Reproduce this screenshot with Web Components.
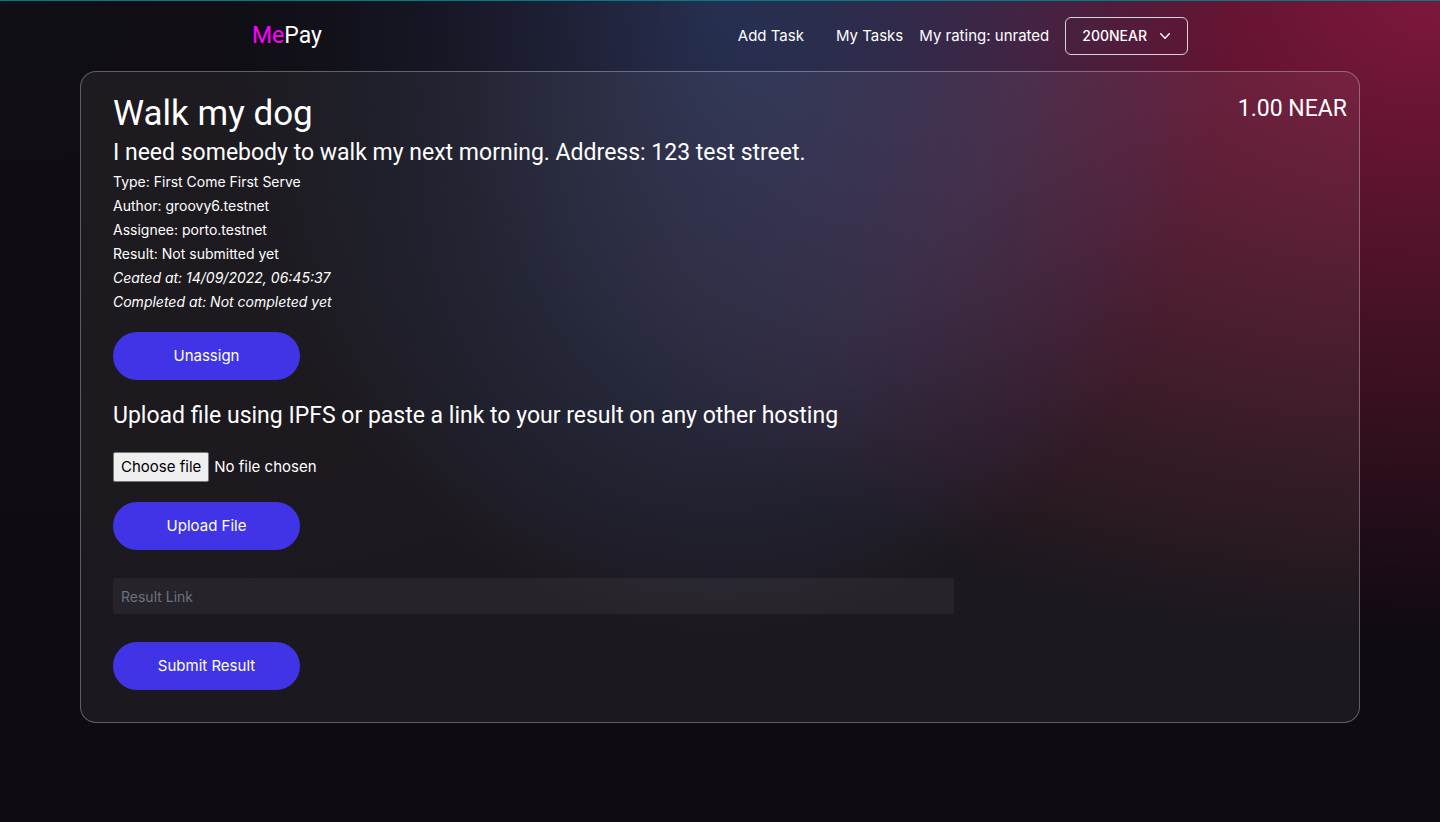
<!DOCTYPE html>
<html lang="en">
<head>
  <meta charset="utf-8">
  <meta name="viewport" content="width=device-width, initial-scale=1">
  <title>MePay</title>
  <style>
    body {
      --display: Roboto, "Liberation Sans", sans-serif;
      margin: 0;
      min-height: 100vh;
      box-sizing: border-box;
      border-top: 1px solid #007c89;
      color: #fff;
      font: 15px/24px Inter, "Liberation Sans", sans-serif;
      background-color: #0f0b12;
      background-image:
        radial-gradient(at 0% 0%, hsl(253, 16%, 7%) 0, transparent 50%),
        radial-gradient(at 50% 0%, hsl(225, 39%, 30%) 0, transparent 50%),
        radial-gradient(at 100% 0%, hsl(339, 69%, 29%) 0, transparent 50%);
      background-size: 100% 109vh;
      background-repeat: no-repeat;
    }
  </style>
</head>
<body>
  <mepay-app></mepay-app>

  <script>
    function define(name, html) {
      const template = document.createElement("template")
      template.innerHTML = html

      window.customElements.define(name, class extends HTMLElement {
        constructor() {
          super()
          this.attachShadow({ mode: "open" })
          this.shadowRoot.appendChild(template.content.cloneNode(true))
        }
      })
    }

    define("mepay-nav", /*html*/`
      <style>
        :host {
          display: block;
        }

        nav {
          display: flex;
          align-items: center;
          justify-content: space-between;
          width: 65%;
          margin: 0 auto;
          padding: 16px 0;
        }

        a {
          color: inherit;
          text-decoration: none;
        }

        .logo {
          font-family: var(--display);
          font-size: 23px;
          line-height: 32px;
        }

        .logo span {
          color: #f0f;
        }

        .links {
          display: flex;
          align-items: center;
          gap: 16px;
        }

        .links a:first-child {
          margin-right: 16px;
        }

        button {
          display: flex;
          align-items: center;
          gap: 8px;
          padding: 8px 12px 8px 16px;
          border: 1px solid #d1d5db;
          border-radius: 6px;
          background: transparent;
          color: inherit;
          font: 500 14px/20px Inter, "Liberation Sans", sans-serif;
          cursor: pointer;
        }

        svg {
          width: 20px;
          height: 20px;
        }
      </style>

      <nav>
        <a class="logo" href="#"><span>Me</span>Pay</a>
        <div class="links">
          <a href="#add">Add Task</a>
          <a href="#tasks">My Tasks</a>
          <span>My rating: unrated</span>
          <button type="button">
            200NEAR
            <svg viewBox="0 0 20 20" fill="currentColor" aria-hidden="true">
              <path fill-rule="evenodd" clip-rule="evenodd" d="M5.23 7.21a.75.75 0 011.06.02L10 11.168l3.71-3.938a.75.75 0 111.08 1.04l-4.25 4.5a.75.75 0 01-1.08 0l-4.25-4.5a.75.75 0 01.02-1.06z"/>
            </svg>
          </button>
        </div>
      </nav>
    `)

    define("mepay-button", /*html*/`
      <style>
        :host {
          display: block;
        }

        button {
          width: 187px;
          padding: 12px 16px;
          border: 0;
          border-radius: 24px;
          background: #4034e6;
          color: inherit;
          font: inherit;
          cursor: pointer;
        }
      </style>

      <button type="button"><slot></slot></button>
    `)

    define("task-meta", /*html*/`
      <style>
        :host {
          display: block;
          font-size: 14px;
          line-height: 24px;
        }
      </style>

      <slot></slot>
    `)

    define("task-card", /*html*/`
      <style>
        :host {
          display: flex;
          margin: 0 80px;
          padding: 21px 12px 32px 32px;
          border: 1px solid rgba(255, 255, 255, 0.3);
          border-radius: 16px;
          background: rgba(255, 255, 255, 0.055);
        }

        .main {
          flex: 15 1 0;
        }

        .price {
          flex: 7 1 0;
          font-family: var(--display);
          font-size: 23px;
          line-height: 32px;
          text-align: right;
        }
      </style>

      <div class="main"><slot></slot></div>
      <div class="price"><slot name="price"></slot></div>
    `)

    define("file-picker", /*html*/`
      <style>
        :host {
          display: flex;
          align-items: center;
          gap: 5px;
        }

        input {
          position: absolute;
          width: 1px;
          height: 1px;
          margin: 0;
          opacity: 0;
        }

        label {
          padding: 2px 7px;
          border: 1px solid #767676;
          border-radius: 2px;
          background: #efefef;
          color: #000;
        }

        input:focus-visible + label {
          outline: 2px solid #fff;
        }
      </style>

      <input type="file" id="file">
      <label for="file">Choose file</label>
      <span class="name">No file chosen</span>
    `)

    define("result-form", /*html*/`
      <style>
        :host {
          display: flex;
          flex-direction: column;
          gap: 20px;
          margin-top: 20px;
        }

        h2 {
          margin: 0;
          font-family: var(--display);
          font-size: 23px;
          font-weight: 400;
          line-height: 32px;
        }

        input {
          display: block;
          box-sizing: border-box;
          width: 100%;
          height: 36px;
          margin: 8px 0;
          padding: 8px;
          border: 0;
          border-radius: 2px;
          background: rgba(255, 255, 255, 0.05);
          color: inherit;
          font: inherit;
          font-size: 14px;
          line-height: 20px;
        }

        input::placeholder {
          color: #6b7280;
        }
      </style>

      <h2>Upload file using IPFS or paste a link to your result on any other hosting</h2>
      <file-picker></file-picker>
      <mepay-button>Upload File</mepay-button>
      <input type="url" placeholder="Result Link" aria-label="Result Link">
      <mepay-button>Submit Result</mepay-button>
    `)

    define("mepay-app", /*html*/`
      <style>
        :host {
          display: block;
        }

        h1,
        p {
          margin: 0;
          font-family: var(--display);
          font-weight: 400;
        }

        h1 {
          font-size: 35px;
          line-height: 42px;
        }

        p {
          margin: 2px 0 1px;
          font-size: 23px;
          line-height: 32px;
        }

        .unassign {
          margin-top: 18px;
        }
      </style>

      <mepay-nav></mepay-nav>
      <main>
        <task-card>
          <h1>Walk my dog</h1>
          <p>I need somebody to walk my next morning. Address: 123 test street.</p>
          <task-meta>Type: First Come First Serve</task-meta>
          <task-meta>Author: groovy6.testnet</task-meta>
          <task-meta>Assignee: porto.testnet</task-meta>
          <task-meta>Result: Not submitted yet</task-meta>
          <task-meta><em>Ceated at: 14/09/2022, 06:45:37</em></task-meta>
          <task-meta><em>Completed at: Not completed yet</em></task-meta>
          <mepay-button class="unassign">Unassign</mepay-button>
          <result-form></result-form>
          <span slot="price">1.00 NEAR</span>
        </task-card>
      </main>
    `)

    // show the picked file's name next to the button
    const form = document.querySelector("mepay-app").shadowRoot.querySelector("result-form")
    const picker = form.shadowRoot.querySelector("file-picker").shadowRoot

    picker.querySelector("input").addEventListener("change", (event) => {
      const file = event.target.files[0]
      picker.querySelector(".name").textContent = file ? file.name : "No file chosen"
    })
  </script>
</body>
</html>
